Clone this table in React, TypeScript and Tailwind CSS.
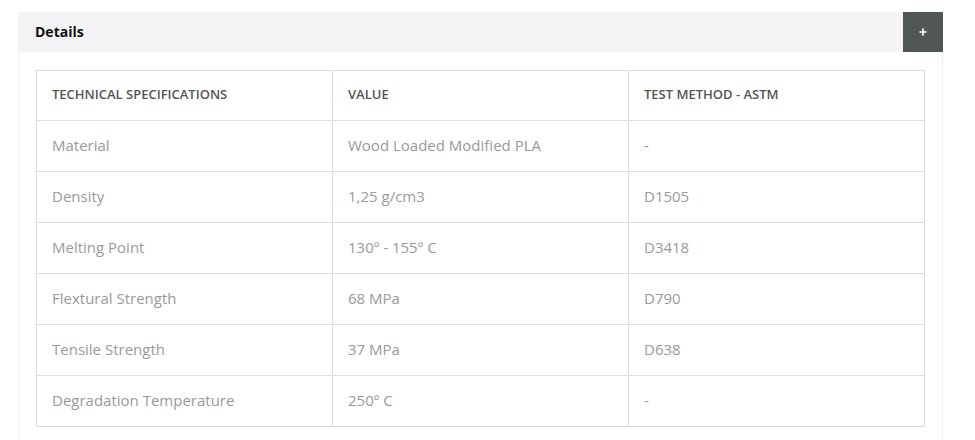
import { Plus } from "lucide-react";

const rows = [
  ["Material", "Wood Loaded Modified PLA", "-"],
  ["Density", "1,25 g/cm3", "D1505"],
  ["Melting Point", "130º - 155º C", "D3418"],
  ["Flextural Strength", "68 MPa", "D790"],
  ["Tensile Strength", "37 MPa", "D638"],
  ["Degradation Temperature", "250º C", "-"],
];

const App = () => {
  return (
    <div className="w-[975px] h-[440px] bg-white pt-3 pl-[18px] pr-8 overflow-hidden font-['Open_Sans',sans-serif]">
      {/* Accordion header */}
      <div className="flex h-10 bg-[#f4f4f6]">
        <div className="flex-1 flex items-center pl-[17px] pb-[1px] text-[14px] font-bold text-[#111]">Details</div>
        <button className="w-10 h-10 flex items-center justify-center bg-[#515757] text-white">
          <Plus size={10} strokeWidth={4} />
        </button>
      </div>

      {/* Body */}
      <div className="border-x border-[#f1f1f1] px-[17px] pt-[18px] pb-6">
        <table className="w-full border-collapse table-fixed">
          <thead>
            <tr className="h-[50px]">
              {["Technical Specifications", "Value", "Test Method - ASTM"].map((h) => (
                <th
                  key={h}
                  className="border border-[#dcdcdc] px-[15px] pb-[2px] text-left text-[13px] font-semibold uppercase text-[#555]"
                >
                  {h}
                </th>
              ))}
            </tr>
          </thead>
          <tbody>
            {rows.map((r) => (
              <tr key={r[0]} className="h-[51px]">
                {r.map((c, i) => (
                  <td key={i} className="border border-[#dcdcdc] px-[15px] pb-[2px] text-[15px] text-[#9a9a9a]">
                    {c}
                  </td>
                ))}
              </tr>
            ))}
          </tbody>
        </table>
      </div>
    </div>
  );
};

export default App;
